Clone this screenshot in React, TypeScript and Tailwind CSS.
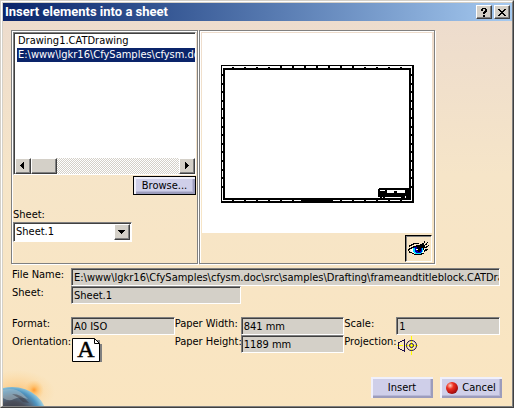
import React from "react"
import clsx from "clsx"

const files = ["Drawing1.CATDrawing", "E:\\www\\lgkr16\\CfySamples\\cfysm.doc\\src\\samples\\Drafting\\frameandtitleblock.CATDrawing"]

const raised =
	"border border-t-white border-l-white border-b-[#404040] border-r-[#404040] bg-[#d4d0c8] shadow-[inset_-1px_-1px_0_#808080]"
const groove = "border border-[#808080] shadow-[inset_1px_1px_0_#fff,1px_1px_0_#fff]"
const sunken = "border border-t-[#808080] border-l-[#808080] border-b-white border-r-white"
const lilac =
	"bg-[#cfcfe9] shadow-[inset_2px_2px_0_#f0f0fb,inset_-2px_-2px_0_#9c9cbc,inset_-3px_-3px_0_#b8b8d6]"

const topTicks = Array.from({ length: 15 }, (_, i) => 232 + i * 12)
const sideTicks = Array.from({ length: 14 }, (_, i) => 74 + Math.round(i * 8.6))

const SheetPreview = () => (
	<svg viewBox="202 33 230 200" className="h-[200px] w-full bg-white" shapeRendering="crispEdges">
		<path d="M221 65h193v138H221z" fill="#000" />
		<path d="M222 66h190v135H222z" fill="#fff" />
		<path d="M223 68h188v132H223z" fill="#000" />
		<path d="M225 70h184v128H225z" fill="#fff" />
		{topTicks.map((x) => (
			<React.Fragment key={x}>
				<rect x={x} y={x > 275 && x < 360 ? 66 : 67} width="2" height="2" />
				<rect x={x} y="200" width="2" height="1" />
			</React.Fragment>
		))}
		{sideTicks.map((y) => (
			<React.Fragment key={y}>
				<rect x="222" y={y} width="1" height="2" />
				<rect x="411" y={y} width="1" height="2" />
			</React.Fragment>
		))}
		<path d="M301 200h32v2h-32z" />
		{/* Title block */}
		<path d="M379 188h31v10h-31zM378 189h1v8h-1z" />
		<path
			d="M380 190h5v1h-5zM387 190h18v1h-18zM387 191h7v2h-7zM397 191h8v2h-8zM379 197h1v1h-1zM382 197h1v1h-1zM385 197h16v1h-16zM405 196h1v2h-1z"
			fill="#fff"
		/>
	</svg>
)

const EyeIcon = () => (
	<svg width="22" height="16" viewBox="0 0 22 16" shapeRendering="crispEdges">
		<path d="M3 8h3V6h9v2h2v3h-2v1h-2v1H7v-1H5v-1H3z" fill="#fff" />
		<path d="M6 6h8v6H8v-1H6z" fill="#0000c0" />
		<path d="M5 7h2v4h1v1h5v-1h1V7h1v4h-1v2H7v-1H6v-1H5z" fill="#00e0ff" />
		<path d="M9 6h4v4h-1v1h-2v-1H9z" />
		<path d="M8 8h2v1H8z" fill="#fff" />
		<path d="M1 4h2V3h2V2h6v1H6v1H4v1H2v1H1zM0 8h1V7h2V6h2V5h3V4h7v1h2v1h2v1h-3v2h-1V7h-2V6H6v1H4v1H2v1H1v1H0zM12 3h2V2h2V0h1v2h-1v2h-4zM17 3h1V2h1V1h1v1h-1v2h-2v1h-2V4h2zM18 5h2V4h1v1h-1v1h-2zM17 8h3v1h-1v1h-2v1h-1V9h1zM1 10h1v1h2v1h2v1h7v-1h3v1h-2v1H6v-1H4v-1H1z" />
	</svg>
)

const PageIcon = () => (
	<svg width="31" height="27" viewBox="0 0 31 27" className="overflow-visible">
		<path d="M3 3h25V7h2v18H3z" fill="#808080" />
		<path d="M.5 1.5h22l5 5v18H.5z" fill="#fff" stroke="#000" />
		<path d="M22.500 1.500v5h5" fill="none" stroke="#000" />
		<text
			x="14"
			y="20"
			fontSize="24"
			fontFamily="Liberation Serif, serif"
			textAnchor="middle"
			stroke="#000"
			strokeWidth=".5">
			A
		</text>
	</svg>
)

const ProjectionIcon = () => (
	<svg width="22" height="20" viewBox="0 0 22 20" shapeRendering="crispEdges">
		<path d="M0 9h6v1H0zM8 9h13v1H8zM14 0h1v19h-1z" fill="#ff0" />
		<path d="M7 3h1v13H7zM5 4h2v1H5zM3 5h2v1H3zM1 6h2v1H1zM1 7h1v6H1zM1 12h2v1H1zM3 13h2v1H3zM5 14h2v1H5z" fill="#1c1048" />
		<g fill="none" stroke="#1c1048" shapeRendering="auto">
			<circle cx="14.500" cy="9.500" r="5" />
			<circle cx="14.500" cy="9.500" r="2" />
		</g>
	</svg>
)

const Planet = () => (
	<svg width="54" height="38" viewBox="0 0 54 38">
		<defs>
			<radialGradient id="glow">
				<stop offset="0" stopColor="#ff9a2e" />
				<stop offset=".35" stopColor="#ffba60" stopOpacity=".8" />
				<stop offset="1" stopColor="#ffce80" stopOpacity="0" />
			</radialGradient>
			<radialGradient id="globe" gradientUnits="userSpaceOnUse" cx="10" cy="50" r="33">
				<stop offset="0" stopColor="#2c2e38" />
				<stop offset=".5" stopColor="#4c505c" />
				<stop offset=".68" stopColor="#55718a" />
				<stop offset=".82" stopColor="#4f94c0" />
				<stop offset=".95" stopColor="#86c0da" />
				<stop offset="1" stopColor="#a9cdd6" />
			</radialGradient>
		</defs>
		<ellipse cx="14" cy="24" rx="38" ry="22" fill="url(#glow)" opacity=".5" />
		<circle cx="31" cy="22" r="10" fill="url(#glow)" />
		<ellipse cx="9" cy="50" rx="35" ry="31" fill="url(#globe)" />
		<path d="M0 22q12-3 20 4l5 5q-9-3-14 0T0 30z" fill="#b4c2c8" opacity=".5" />
		<path d="M9 26q10 0 17 9l-6-1q-5-5-11-8z" fill="#3a3036" opacity=".45" />
	</svg>
)

type FieldProps = { id: string; label: string; value: string; className?: string }

const Field = ({ id, label, value, className }: FieldProps) => (
	<>
		<label htmlFor={id} className="whitespace-nowrap">
			{label}
		</label>
		<input
			id={id}
			readOnly
			value={value}
			className={clsx(
				"h-[18px] w-full min-w-0 bg-[#d4d0c8] pl-[2px] shadow-[inset_1px_1px_0_#404040] outline-none",
				sunken,
				className,
			)}
		/>
	</>
)

const Arrow = ({ d }: { d: string }) => (
	<svg width="8" height="8" viewBox="0 0 8 8" shapeRendering="crispEdges">
		<path d={d} />
	</svg>
)

export default function App() {
	const [selected, setSelected] = React.useState(1)

	return (
		<div className="min-h-screen border border-t-[#d4d0c8] border-r-[#404040] border-b-[#404040] border-l-[#d4d0c8] bg-[#d4d0c8] font-['DejaVu_Sans_Condensed','DejaVu_Sans',sans-serif] text-[11px] leading-[14px] text-black flex flex-col">
			<div className="flex flex-1 flex-col border border-t-white border-r-[#808080] border-b-[#808080] border-l-white pt-px pl-px">
				<header className="flex h-[18px] items-center gap-[2px] bg-gradient-to-r from-[#0a246a] to-[#a6caf0] pr-[2px] pl-[2px]">
					<h1 className="flex-1 font-[Roboto,sans-serif] text-[13px] font-bold whitespace-nowrap text-white">
						Insert elements into a sheet
					</h1>
					<button aria-label="Help" className={clsx("flex h-[14px] w-4 items-center justify-center", raised)}>
						<svg width="8" height="9" viewBox="0 0 8 9" shapeRendering="crispEdges">
							<path d="M2 0h4v1h1v3H6v1H5v1H3V4h1V3h1V1H3v2H1V1h1zM3 7h2v2H3z" />
						</svg>
					</button>
					<button aria-label="Close" className={clsx("flex h-[14px] w-4 items-center justify-center", raised)}>
						<svg width="8" height="7" viewBox="0 0 8 7" shapeRendering="crispEdges">
							<path d="M0 0h2v1h1v1h2V1h1V0h2v1H7v1H6v1H5v1h1v1h1v1h1v1H6V6H5V5H3v1H2v1H0V6h1V5h1V4h1V3H2V2H1V1H0z" />
						</svg>
					</button>
				</header>

				<main className="flex flex-1 flex-col bg-gradient-to-b from-[#eddccd] via-[#f6e5c8] via-40% to-[#fae5c0] pt-[9px]">
					<div className="grid grid-cols-[187px_1fr] gap-px pr-[77px] pl-2">
						<section className={clsx("flex flex-col p-px", groove)}>
							<div className={clsx("bg-white pt-px pl-px shadow-[inset_1px_1px_0_#404040]", sunken)}>
								<ul role="listbox" aria-label="Files" className="h-[124px] overflow-hidden pl-[2px]">
									{files.map((file, i) => (
										<li key={file} role="option" aria-selected={i === selected}>
											<button
												onClick={() => setSelected(i)}
												className={clsx(
													"block h-[14px] w-full overflow-hidden pl-px text-left whitespace-nowrap",
													i === selected && "bg-[#0a246a] text-white",
												)}>
												{file}
											</button>
										</li>
									))}
								</ul>
								<div className="flex h-4 bg-[repeating-conic-gradient(#fff_0_25%,#d4d0c8_0_50%)] bg-[length:2px_2px]">
									<button aria-label="Scroll left" className={clsx("flex w-4 items-center justify-center", raised)}>
										<Arrow d="M5 0v7H4V6H3V5H2V4H1V3h1V2h1V1h1V0z" />
									</button>
									<div className={clsx("w-[26px]", raised)} />
									<button
										aria-label="Scroll right"
										className={clsx("ml-auto flex w-4 items-center justify-center", raised)}>
										<Arrow d="M2 0v7h1V6h1V5h1V4h1V3H5V2H4V1H3V0z" />
									</button>
								</div>
							</div>
							<button className={clsx("mt-px h-[19px] w-[63px] self-end border border-black", lilac)}>
								Browse...
							</button>
							<label htmlFor="sheet-select" className="mt-[13px]">
								Sheet:
							</label>
							<div className={clsx("relative h-5 w-[119px] bg-white shadow-[inset_1px_1px_0_#404040]", sunken)}>
								<select id="sheet-select" className="h-full w-full appearance-none bg-transparent pl-[2px] outline-none">
									<option>Sheet.1</option>
								</select>
								<span
									className={clsx(
										"pointer-events-none absolute top-px right-px bottom-px flex w-4 items-center justify-center",
										raised,
									)}>
									<Arrow d="M0 2h7v1H6v1H5v1H4v1H3V5H2V4H1V3H0z" />
								</span>
							</div>
						</section>

						<section className={clsx("flex flex-col gap-[2px] px-[2px] pt-[2px] pb-px", groove)}>
							<SheetPreview />
							<button
								aria-label="Preview"
								className="flex h-[27px] w-[27px] items-center justify-center self-end border border-t-black border-r-white border-b-white border-l-black shadow-[inset_1px_1px_0_#808080]">
								<EyeIcon />
							</button>
						</section>
					</div>

					<div className="mt-1 grid grid-cols-[59px_1fr_66px_1fr_52px_1fr] items-start pr-3 pl-[9px]">
						<Field
							id="file-name"
							label="File Name:"
							value="E:\www\lgkr16\CfySamples\cfysm.doc\src\samples\Drafting\frameandtitleblock.CATDra"
							className="col-span-5"
						/>
						<Field id="sheet" label="Sheet:" value="Sheet.1" className="col-span-2" />
					</div>
					<div className="mt-[13px] grid grid-cols-[59px_1fr_66px_1fr_52px_1fr] items-start pr-3 pl-[9px]">
						<Field id="format" label="Format:" value="A0 ISO" />
						<Field id="paper-width" label="Paper Width:" value="841 mm" />
						<Field id="scale" label="Scale:" value="1" />
						<span className="whitespace-nowrap">Orientation:</span>
						<div className="pt-[2px] pl-px">
							<PageIcon />
						</div>
						<Field id="paper-height" label="Paper Height:" value="1189 mm" />
						<span className="whitespace-nowrap">Projection:</span>
						<div className="pt-px pl-px">
							<ProjectionIcon />
						</div>
					</div>

					<footer className="flex flex-1 items-end justify-between">
						<Planet />
						<div className="flex gap-[7px] pr-[10px] pb-2">
							<button className={clsx("h-[21px] w-[62px]", lilac)}>Insert</button>
							<button className={clsx("flex h-[21px] w-[62px] items-center justify-center gap-1", lilac)}>
								<span className="h-3 w-3 rounded-full bg-[radial-gradient(circle_at_35%_30%,#ffd0c0_0,#ee3020_30%,#b01010_65%,#501010_100%)]" />
								Cancel
							</button>
						</div>
					</footer>
				</main>
			</div>
		</div>
	)
}
